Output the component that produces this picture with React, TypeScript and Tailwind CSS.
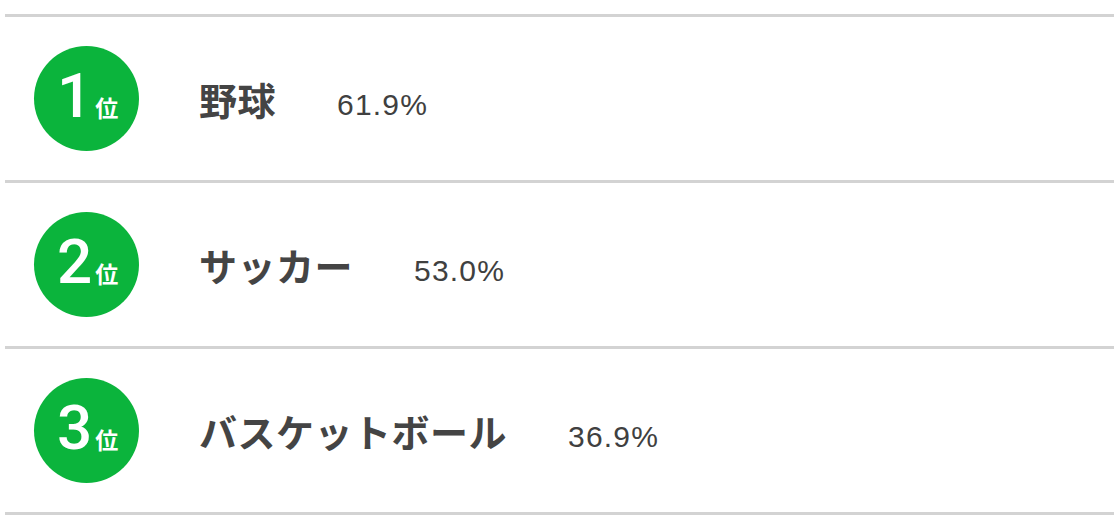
const ranking = [
  { rank: 1, name: "野球", rate: "61.9%" },
  { rank: 2, name: "サッカー", rate: "53.0%" },
  { rank: 3, name: "バスケットボール", rate: "36.9%" },
];

const RankBadge = ({ rank }: { rank: number }) => (
  <div className="w-[105px] h-[105px] flex-shrink-0 rounded-full bg-[#0bb43c] flex items-baseline justify-center pt-[14px] pl-[2px] text-white">
    <span className="font-['Roboto',sans-serif] font-medium text-[62px] leading-[72px]">
      {rank}
    </span>
    <span className="font-['Noto_Sans_CJK_JP',sans-serif] font-bold text-[23px] ml-[3px]">
      位
    </span>
  </div>
);

export default function App() {
  return (
    <div className="w-[1120px] h-[530px] bg-white pt-[14px] pl-[5px] pr-[6px]">
      <ul className="border-b-[3px] border-[#d3d3d3]">
        {ranking.map((item) => (
          <li
            key={item.rank}
            className="h-[166px] border-t-[3px] border-[#d3d3d3] flex items-center pl-[29px]"
          >
            <RankBadge rank={item.rank} />
            <div className="flex items-baseline ml-[60px] text-[#444]">
              <span className="font-['Noto_Sans_CJK_JP',sans-serif] font-bold text-[38px] tracking-[0.5px]">
                {item.name}
              </span>
              <span className="ml-[61px] font-['Liberation_Sans',sans-serif] text-[30px] tracking-[1.2px] text-[#404040]">
                {item.rate}
              </span>
            </div>
          </li>
        ))}
      </ul>
    </div>
  );
}
